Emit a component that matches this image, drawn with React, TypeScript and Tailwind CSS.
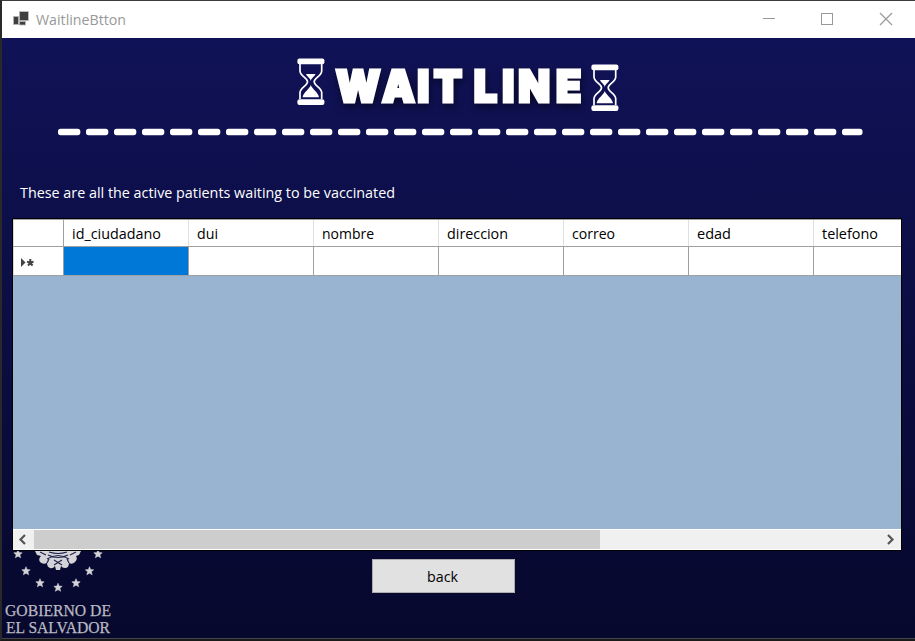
const columns = ['id_ciudadano', 'dui', 'nombre', 'direccion', 'correo', 'edad', 'telefono'];
const labelWidths = [89, 21, 52, 61, 43, 34, 56];

function Label({ text, width, className = '', fill = '#000' }: { text: string; width: number; className?: string; fill?: string }) {
  return (
    <svg width={width} height="22" className={`block shrink-0 overflow-visible ${className}`}>
      <text x="0" y="16" textLength={width} lengthAdjust="spacingAndGlyphs" fill={fill} fontSize="14.6" fontFamily='"Open Sans", "Noto Sans", sans-serif'>
        {text}
      </text>
    </svg>
  );
}

function Hourglass({ className = '' }: { className?: string }) {
  return (
    <svg width="28" height="48" viewBox="0 0 28 48" fill="none" stroke="#fff" className={`shrink-0 ${className}`}>
      <rect x="0.4" y="0.5" width="27" height="5.8" rx="2" fill="#fff" stroke="none" />
      <rect x="0.4" y="41.2" width="27" height="5.8" rx="2" fill="#fff" stroke="none" />
      <path d="M3 6V13C3 18 10.500 20 10.500 23.700S3 30 3 34.500V41M24.700 6V13C24.700 18 17.200 20 17.200 23.700S24.700 30 24.700 34.500V41" strokeWidth="1.700" />
      <path d="M9 16H18.500C17 19.500 14.500 19.500 13.800 23C13 19.500 10.500 19.500 9 16Z" fill="#fff" stroke="none" />
      <path d="M13.800 27C15 31 21 34 22 39.200H5.600C6.600 34 12.600 31 13.800 27Z" fill="#fff" stroke="none" />
    </svg>
  );
}

function Heading() {
  return (
    <svg width="266" height="60" className="block shrink-0 overflow-visible drop-shadow-[1px_3px_4px_rgba(0,0,0,0.55)]">
      <g transform="scale(0.95 1)" fill="#fff" stroke="#fff" strokeWidth="3" fontFamily="Inter, sans-serif" fontWeight="900" fontSize="43.5">
        <text x="11.3 60.1 97 114.5" y="43.8">WAIT</text>
        <text x="156.5 186.5 203.4 243.2" y="43.8">LINE</text>
      </g>
    </svg>
  );
}

const stars = [[18, 3], [98, 3], [26, 20], [89.5, 20], [40, 32], [76, 32], [58, 36.5]];

function GovernmentSeal() {
  return (
    <div className="w-[118px]">
      <svg width="118" height="50" className="block">
        <g fill="#d3d3d8">
          {stars.map(([x, y]) => (
            <path key={`${x}-${y}`} transform={`translate(${x} ${y})`} stroke="#d3d3d8" strokeWidth="0.5" d="M0-4.3L1.200-1.400L4.200-1.200L1.900.8L2.700 3.800L0 2.200L-2.700 3.800L-1.900.8L-4.200-1.200L-1.200-1.400Z" />
          ))}
          <path d="M35 0H81L79 4L76 5Q78 8 75 11Q72 14 69 12Q69 17 65 17Q62 17 61 15L60 19H56L55 15Q53 18 50 17Q47 16 47 12Q43 14 40 11Q38 8 41 5L37 4Z" />
        </g>
        <g fill="none" stroke="#22234b" strokeWidth="1.200">
          <path d="M40 1L46 4M76 1L70 4M48 4Q58 9 68 4M47 8Q58 1 69 8M54 9L62 14M62 9L54 14M47 12L49 8M69 12L67 8M49 1Q58 4 67 1" />
        </g>
      </svg>
      <svg width="118" height="37" className="block overflow-visible" fill="#b9b9c1" stroke="#b9b9c1" strokeWidth="0.25" fontFamily='"Liberation Serif", serif' fontSize="16.800">
        <text x="5" y="14.700" textLength="106" lengthAdjust="spacingAndGlyphs">GOBIERNO DE</text>
        <text x="6" y="32" textLength="104" lengthAdjust="spacingAndGlyphs">EL SALVADOR</text>
      </svg>
    </div>
  );
}

function TitleBar() {
  return (
    <header className="flex h-[37px] shrink-0 items-center bg-white">
      <svg width="17" height="16" className="-mt-[1px] ml-[10px]">
        <g fill="#3f3f3f" stroke="#bbb" strokeWidth="0.8">
          <rect x="1.4" y="5.4" width="5.2" height="8.2" />
          <rect x="7.4" y="0.6" width="9" height="9" />
          <rect x="7.4" y="10.4" width="6.2" height="3.6" />
        </g>
      </svg>
      <Label text="WaitlineBtton" width={90} fill="#999" className="ml-[7px]" />
      <svg width="132" height="14" className="-mt-[2px] mr-[22px] ml-auto" fill="none" stroke="#999" shapeRendering="crispEdges">
        <path d="M2 6.5H14" />
        <rect x="60.500" y="1.5" width="11" height="11" />
        <path d="M119 1L131 13M131 1L119 13" strokeWidth="1.200" shapeRendering="auto" />
      </svg>
    </header>
  );
}

function ScrollArrow({ d }: { d: string }) {
  return (
    <svg width="21" height="19" fill="none" stroke="#555" strokeWidth="2.200" className="shrink-0">
      <path d={d} />
    </svg>
  );
}

function PatientGrid() {
  return (
    <div className="ml-[10px] flex h-[333px] w-[890px] shrink-0 flex-col border border-black bg-[#99b4d1]">
      <div className="flex h-7 shrink-0 overflow-hidden border-y border-[#a0a0a0] bg-white">
        <div className="w-[51px] shrink-0 border-r border-l border-r-[#a0a0a0] border-l-[#d8d8d8]" />
        {columns.map((name, i) => (
          <div key={name} className="flex w-[125px] shrink-0 items-center border-r border-[#e0e0e0] pl-2">
            <Label text={name} width={labelWidths[i]} className="mt-[2px]" />
          </div>
        ))}
      </div>
      <div className="flex h-[29px] shrink-0 overflow-hidden border-b border-[#a0a0a0] bg-white">
        <div className="flex w-[51px] shrink-0 items-center border-r border-l border-r-[#a0a0a0] border-l-[#d8d8d8] pl-[6px]">
          <svg width="16" height="12" className="mt-[3px]">
            <path d="M1 1L5.500 5.500L1 10Z" fill="#444" />
            <path d="M10.300 5.700V2M10.300 5.700L13.600 4.600M10.300 5.700L12.500 8.700M10.300 5.700L8.100 8.700M10.300 5.700L7 4.600" stroke="#444" strokeWidth="2" />
          </svg>
        </div>
        {columns.map((name, i) => (
          <div key={name} className={`w-[125px] shrink-0 border-r border-[#a0a0a0] ${i === 0 ? 'bg-[#0078d7]' : 'bg-white'}`} />
        ))}
      </div>
      <div className="mt-auto flex h-[21px] shrink-0 border-y border-white bg-[#f0f0f0]">
        <ScrollArrow d="M12 5L7.500 9.500L12 14" />
        <div className="w-[566px] bg-[#cdcdcd]" />
        <div className="ml-auto">
          <ScrollArrow d="M8 5L12.500 9.500L8 14" />
        </div>
      </div>
    </div>
  );
}

export default function App() {
  return (
    <div className="flex h-[641px] w-[915px] flex-col overflow-hidden border-t border-b-2 border-l-2 border-t-[#3b3b3b] border-b-[#191919] border-l-[#292929]">
      <TitleBar />
      <main className="flex h-[601px] shrink-0 flex-col border-b border-[#44444c] bg-linear-to-b from-[#101257] to-[#07082d]">
        <div className="flex h-[90px] shrink-0 items-start pt-[20px] pl-[295px]">
          <Hourglass />
          <Heading />
          <Hourglass className="mt-[6px]" />
        </div>
        <svg width="820" height="8" className="ml-[50px] block shrink-0">
          {Array.from({ length: 29 }, (_, i) => (
            <rect key={i} x={6 + i * 28} y="0.800" width={i === 28 ? 20.5 : 22.3} height="6.400" rx="2.600" fill="#fff" />
          ))}
        </svg>
        <div className="flex h-[82px] shrink-0 pt-[46px] pl-[18px]">
          <Label text="These are all the active patients waiting to be vaccinated" width={375} fill="#fff" />
        </div>
        <PatientGrid />
        <div className="flex h-[87px] shrink-0 items-start">
          <div className="-ml-[2px] w-[372px]">
            <GovernmentSeal />
          </div>
          <button className="mt-[8px] flex h-[34px] w-[143px] items-center justify-center border border-[#adadad] bg-[#e1e1e1]">
            <Label text="back" width={31} className="mt-[2px] -ml-[2px]" />
          </button>
        </div>
      </main>
    </div>
  );
}
